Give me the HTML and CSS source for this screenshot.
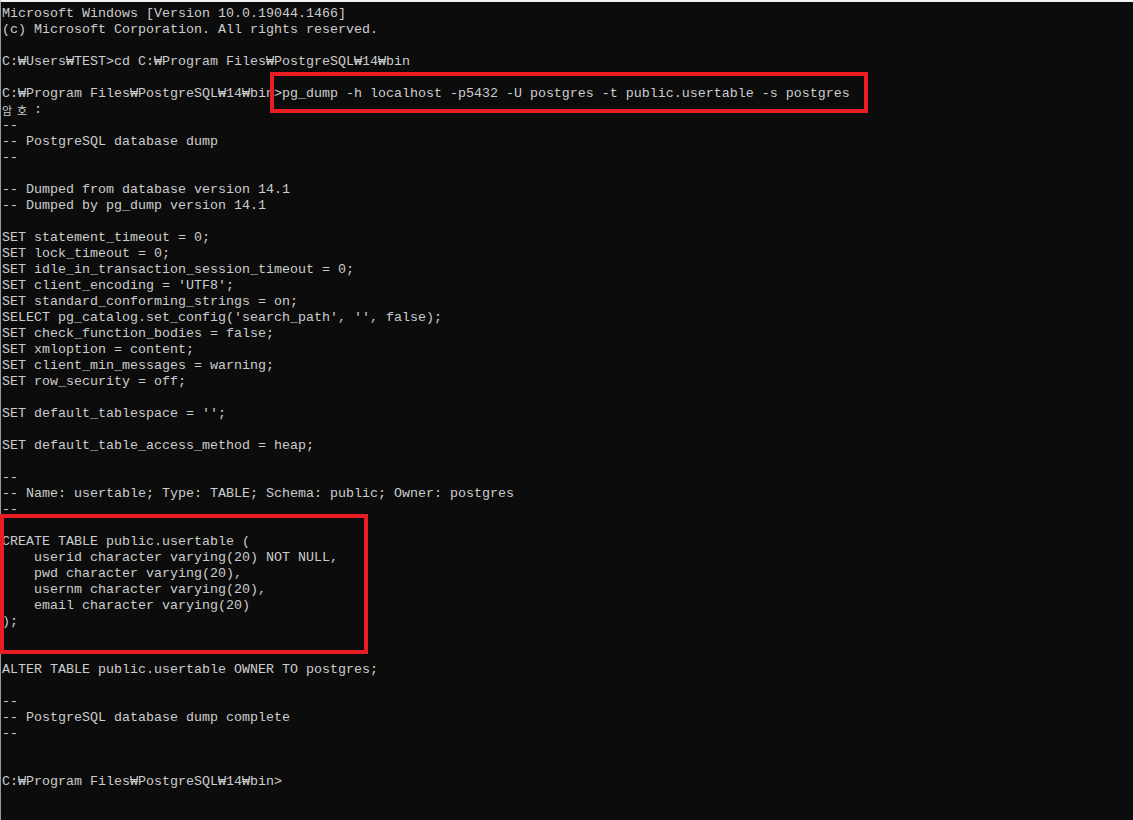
FILE: index.html
```html
<!DOCTYPE html>
<html lang="ko">
<head>
<meta charset="utf-8">
<title>명령 프롬프트</title>
<link rel="stylesheet" href="styles.css">
</head>
<body>
<div class="console">
<pre class="output">Microsoft Windows [Version 10.0.19044.1466]
(c) Microsoft Corporation. All rights reserved.

C:₩Users₩TEST&gt;cd C:₩Program Files₩PostgreSQL₩14₩bin

C:₩Program Files₩PostgreSQL₩14₩bin&gt;pg_dump -h localhost -p5432 -U postgres -t public.usertable -s postgres</pre>
<div class="output line"><span class="wide">암호</span><span class="colon">:</span></div>
<pre class="output">--
-- PostgreSQL database dump
--

-- Dumped from database version 14.1
-- Dumped by pg_dump version 14.1

SET statement_timeout = 0;
SET lock_timeout = 0;
SET idle_in_transaction_session_timeout = 0;
SET client_encoding = 'UTF8';
SET standard_conforming_strings = on;
SELECT pg_catalog.set_config('search_path', '', false);
SET check_function_bodies = false;
SET xmloption = content;
SET client_min_messages = warning;
SET row_security = off;

SET default_tablespace = '';

SET default_table_access_method = heap;

--
-- Name: usertable; Type: TABLE; Schema: public; Owner: postgres
--

CREATE TABLE public.usertable (
    userid character varying(20) NOT NULL,
    pwd character varying(20),
    usernm character varying(20),
    email character varying(20)
);


ALTER TABLE public.usertable OWNER TO postgres;

--
-- PostgreSQL database dump complete
--


C:₩Program Files₩PostgreSQL₩14₩bin&gt;</pre>
<div class="highlight highlight-command"></div>
<div class="highlight highlight-table"></div>
</div>
</body>
</html>
```

FILE: styles.css
```css
html, body {
  margin: 0;
  padding: 0;
  background: #0c0c0c;
}

body {
  width: 1133px;
  height: 820px;
  overflow: hidden;
}

.console {
  position: relative;
  box-sizing: border-box;
  width: 1133px;
  height: 820px;
  background: #0c0c0c;
  border-top: 2px solid #f2f2f2;
  border-left: 1px solid #9a9a9a;
  padding: 4px 0 0 1px;
}

.output {
  margin: 0;
  font-family: "Liberation Mono", "DejaVu Sans Mono", "Noto Sans CJK KR", monospace;
  font-size: 13.333px;
  line-height: 16px;
  color: #cccccc;
  white-space: pre;
}

.line {
  display: flex;
  height: 16px;
}

.wide {
  display: block;
  width: 32px;
  height: 16px;
  font-family: "Noto Sans CJK KR", sans-serif;
  font-size: 11px;
  line-height: 16px;
  letter-spacing: 5px;
}

.colon {
  display: block;
  height: 16px;
}

.highlight {
  position: absolute;
  box-sizing: border-box;
  border: 4px solid #ec1c24;
}

.highlight-command {
  left: 269px;
  top: 70px;
  width: 598px;
  height: 41px;
}

.highlight-table {
  left: -1px;
  top: 512px;
  width: 368px;
  height: 140px;
}
```
